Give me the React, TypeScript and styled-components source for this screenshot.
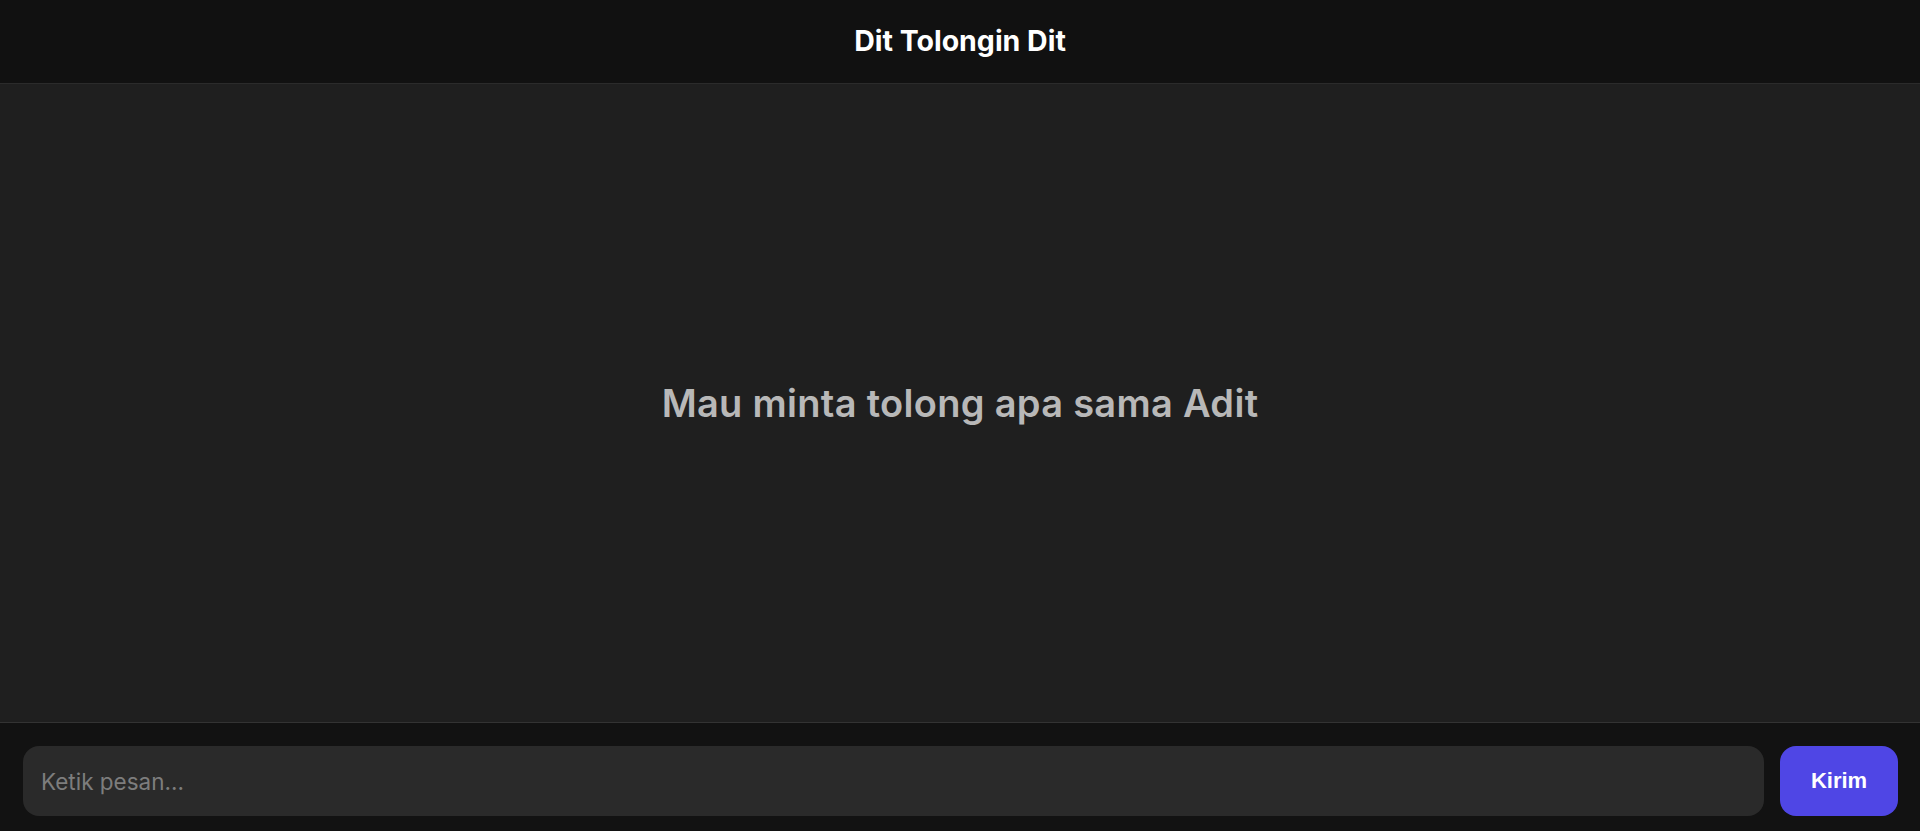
import { useState } from 'react';

import { createGlobalStyle, styled } from 'styled-components';

const GlobalStyle = createGlobalStyle`
  * {
    box-sizing: border-box;
  }

  html,
  body {
    margin: 0;
    padding: 0;
    background: #121212;
  }

  body {
    font-family: Inter, 'Noto Sans', sans-serif;
    color: #fff;
  }
`;

export default function App() {
  const [message, setMessage] = useState('');

  return (
    <>
      <GlobalStyle />
      <S.Page>
        <S.Header>
          <S.Title>Dit Tolongin Dit</S.Title>
        </S.Header>

        <S.ChatArea>
          <S.EmptyText>Mau minta tolong apa sama Adit</S.EmptyText>
        </S.ChatArea>

        <S.Composer onSubmit={(e) => e.preventDefault()}>
          <S.MessageInput
            value={message}
            placeholder="Ketik pesan..."
            onChange={(e) => setMessage(e.target.value)}
          />
          <S.SendButton type="submit">Kirim</S.SendButton>
        </S.Composer>
      </S.Page>
    </>
  );
}

const S = {
  Page: styled.div`
    display: flex;
    flex-direction: column;

    width: 100%;
    height: 831px;
    overflow: hidden;
  `,
  Header: styled.header`
    display: flex;
    flex-shrink: 0;
    align-items: center;
    justify-content: center;

    height: 84px;

    background: #111111;
    border-bottom: 1px solid #2b2b2b;
  `,
  Title: styled.h1`
    margin: 0;

    font-size: 28.5px;
    font-weight: 700;
    line-height: 1;
    color: #ffffff;
  `,
  ChatArea: styled.main`
    display: flex;
    flex: 1;
    align-items: center;
    justify-content: center;

    background: #1f1f1f;
    border-bottom: 1px solid #333333;
  `,
  EmptyText: styled.p`
    margin: 0;

    font-size: 38px;
    font-weight: 600;
    letter-spacing: 0.3px;
    color: #b8b8b8;
  `,
  Composer: styled.form`
    display: flex;
    flex-shrink: 0;
    column-gap: 16px;
    align-items: flex-start;

    height: 108px;
    padding: 23px 22px 0 23px;

    background: #121212;
  `,
  MessageInput: styled.input`
    flex: 1;

    height: 70px;
    padding: 0 18px;

    font-family: Inter, 'Noto Sans', sans-serif;
    font-size: 22.5px;
    color: #e5e5e5;

    background: #2a2a2a;
    border: none;
    border-radius: 16px;
    outline: none;

    &::placeholder {
      color: #7d7d7d;
    }
  `,
  SendButton: styled.button`
    width: 118px;
    height: 70px;

    font-family: 'Liberation Sans', Arial, sans-serif;
    font-size: 22px;
    font-weight: 700;
    color: #ffffff;

    cursor: pointer;
    background: #4f46e5;
    border: none;
    border-radius: 16px;
  `,
};
